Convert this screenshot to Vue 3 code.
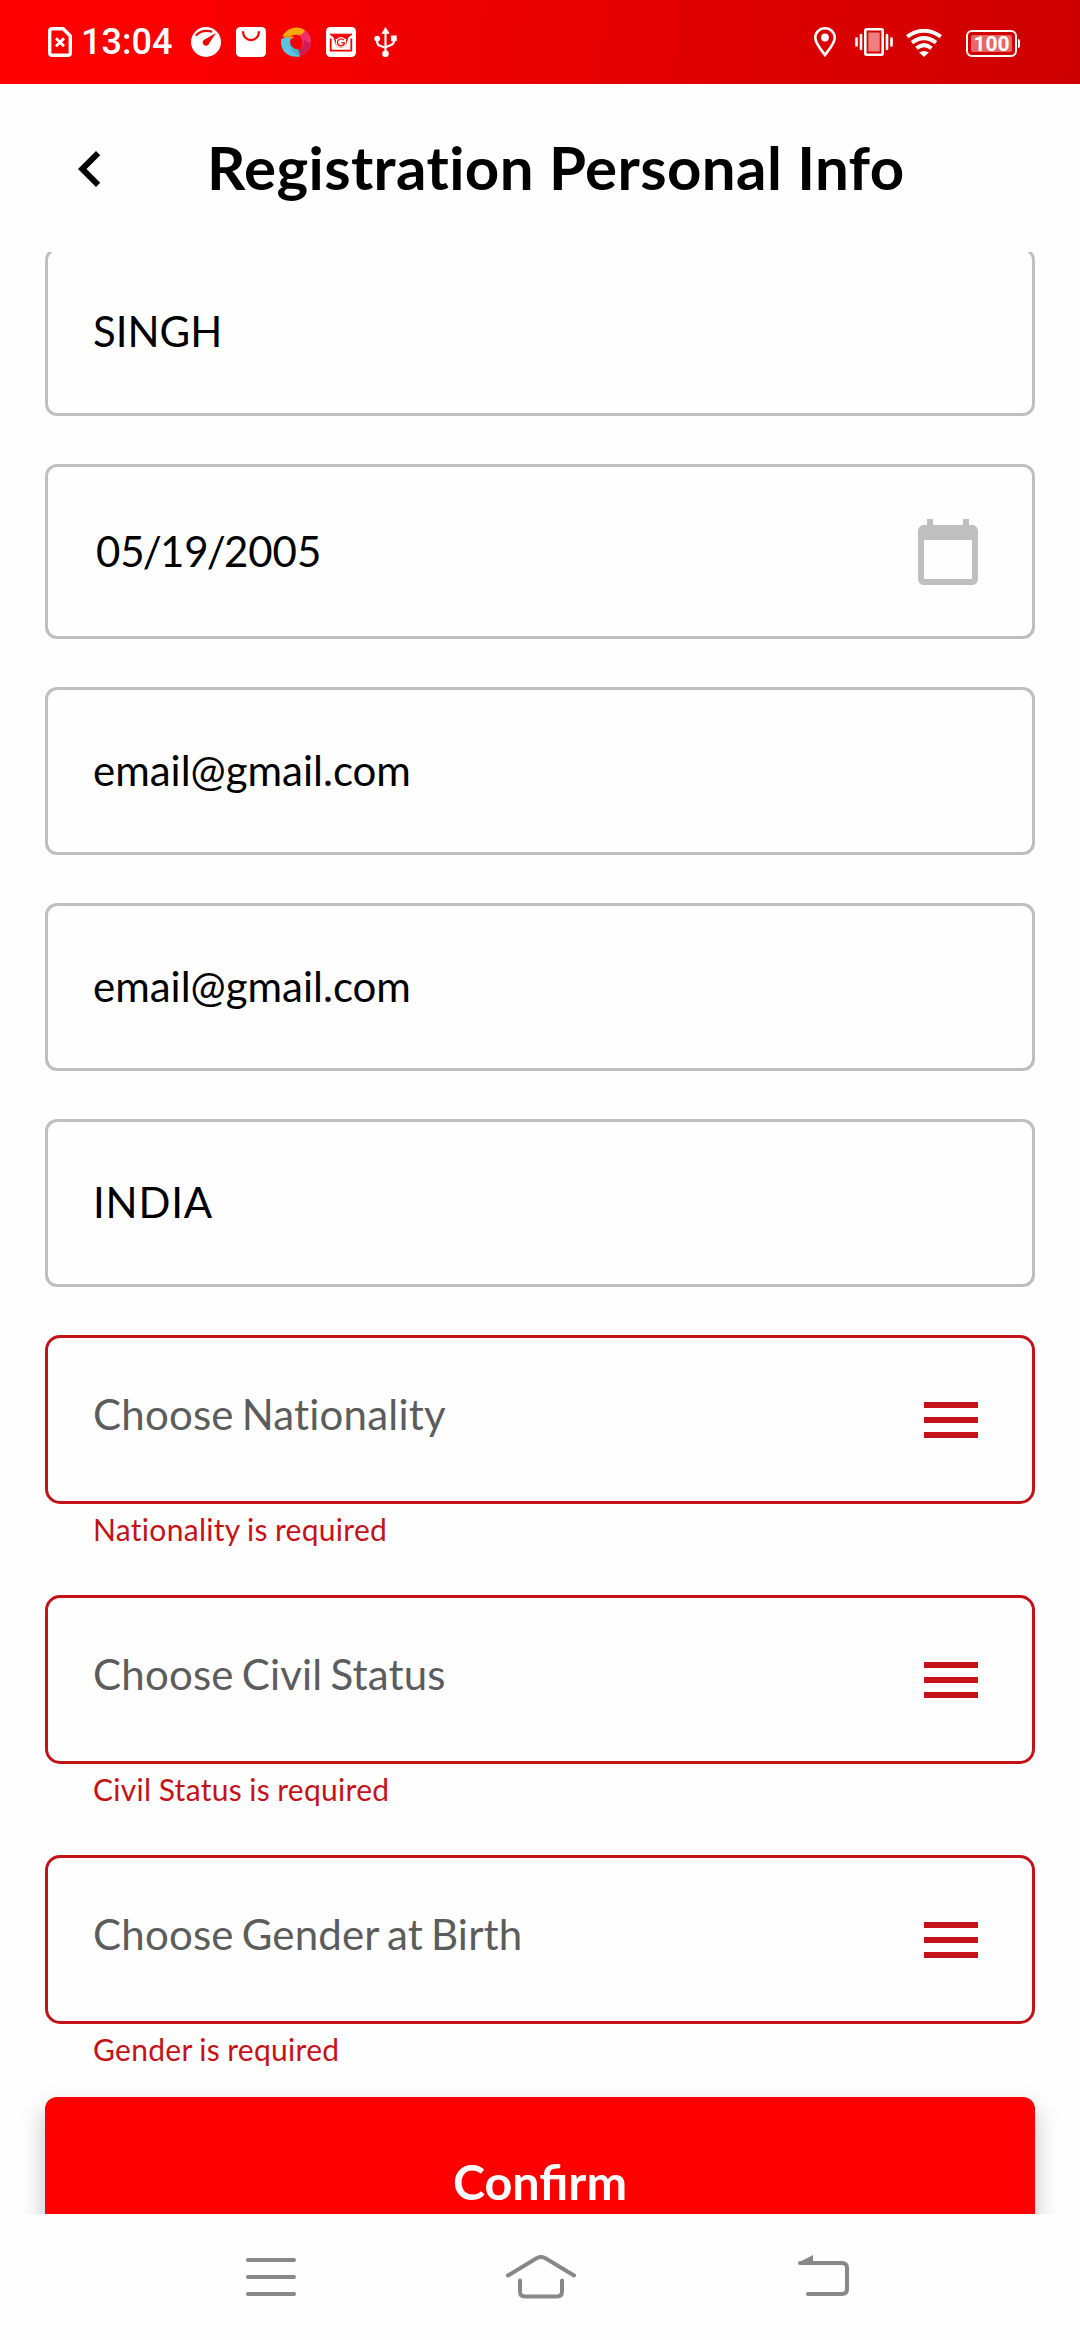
<script setup>
const fields = [
  { id: 'surname', value: 'SINGH' },
  { id: 'birthdate', value: '05/19/2005', kind: 'date' },
  { id: 'email', value: 'email@gmail.com' },
  { id: 'emailConfirm', value: 'email@gmail.com' },
  { id: 'country', value: 'INDIA', kind: 'country' },
]

const choices = [
  { id: 'nationality', label: 'Choose Nationality', error: 'Nationality is required' },
  { id: 'civil', label: 'Choose Civil Status', error: 'Civil Status is required' },
  { id: 'gender', label: 'Choose Gender at Birth', error: 'Gender is required' },
]
</script>

<template>
  <div class="screen">
    <div class="status">
      <div class="status-left">
        <svg class="sim" width="24" height="30" viewBox="0 0 24 30" fill="none" stroke="#fff">
          <path d="M4 1.7H15.2L22.3 9V26Q22.3 28.3 20 28.3H4Q1.7 28.3 1.7 26V4Q1.7 1.7 4 1.7Z" stroke-width="3.4" />
          <path d="M8 11.3L16 19.3M16 11.3L8 19.3" stroke-width="2.8" />
        </svg>
        <span class="clock">13:04</span>
        <svg width="30" height="30" viewBox="0 0 30 30">
          <circle cx="15" cy="15" r="15" fill="#fff" />
          <path d="M4.7 8.6C8.5 4.5 14.5 2.9 21 4.6" fill="none" stroke="#f60000" stroke-width="2.2" />
          <path d="M25 6L18.2 16.2A3.3 3.3 0 1 1 13.6 12.4Z" fill="#f60000" />
        </svg>
        <svg width="30" height="30" viewBox="0 0 30 30">
          <rect width="30" height="30" rx="4.5" fill="#fff" />
          <path d="M7 4.2C7 16 23 16 23 4.2" fill="none" stroke="#f50000" stroke-width="2.2" />
        </svg>
        <svg width="30" height="30" viewBox="0 0 30 30">
          <path d="M1.5 9.5C5 1.5 15-2.5 24 3L23 12C19 7 13 6.5 8.5 10Q5 9 1.5 9.5Z" fill="#ffa60a" />
          <path d="M1.5 9.5Q7.5 7 13.5 10.5L9 12.5Z" fill="#f88b08" />
          <path d="M24 3C31 8 32 17 27 24Q25 27 21 28L14 26C20 23.5 23 18 20.5 12L18 7.8Q22 8 24 3Z" fill="#ee3168" />
          <path d="M22.5 12Q24 22 14 26L21 28Q29 24 30 16Q27 16 22.5 12Z" fill="#cd1c55" />
          <path d="M0 12.5Q4.5 9 10 11C7.5 17 10 21.5 17 22.5Q18.5 26 19 29.5C7 31.5-1.5 23 0 12.5Z" fill="#5bc4dc" />
          <path d="M8.8 15Q10 21.5 17 22.5L19 29.5Q9.5 25 8.8 15Z" fill="#48aed0" />
        </svg>
        <svg width="30" height="30" viewBox="0 0 30 30">
          <rect width="30" height="30" rx="4.5" fill="#fff" />
          <g fill="none" stroke="#f20000" stroke-width="1.8">
            <path d="M4.700 11.500V23.700H25.300V11.500" />
            <path d="M4 7.200H26L20 11.500H10Z" fill="#f20000" stroke-width="1" />
            <path d="M7.500 8L10.500 17.300Q15 23 19.500 17.300L22.500 8" stroke-width="1.400" />
          </g>
          <circle cx="15" cy="15.300" r="5.200" fill="#fff" />
          <path d="M17.800 13.200A3.500 3.500 0 1 0 18.500 15.800H15.200" fill="none" stroke="#f20000" stroke-width="1.300" />
        </svg>
        <svg class="usb" width="24" height="30" viewBox="0 0 24 30">
          <path d="M11.500 5V25M3.200 12V15Q3.200 18 6 18.800L11.500 20.800M19.800 12V14.500Q19.800 17 17 18L11.500 20.300" fill="none" stroke="#fff" stroke-width="2.100" />
          <path d="M11.500 0L15.700 6.800H7.300Z" fill="#fff" />
          <rect x="17" y="8.500" width="5.700" height="5.700" fill="#fff" />
          <circle cx="3.200" cy="11.600" r="2.900" fill="#fff" />
          <circle cx="11.500" cy="26.700" r="3.300" fill="#fff" />
        </svg>
      </div>
      <div class="status-right">
        <svg class="pin" width="22" height="30" viewBox="0 0 22 30">
          <path d="M11 28C7.500 23 1.300 16.500 1.300 10.700A9.700 9.400 0 0 1 20.700 10.700C20.700 16.500 14.500 23 11 28Z" fill="none" stroke="#fff" stroke-width="2.600" />
          <circle cx="11" cy="10.500" r="3.900" fill="#fff" />
        </svg>
        <svg class="vibrate" width="38" height="28" viewBox="0 0 38 28">
          <rect x="10.300" y="1.300" width="17.400" height="25.400" rx="1.500" fill="none" stroke="#fff" stroke-width="2.600" />
          <rect x="12.800" y="4" width="12.400" height="20" fill="#f08080" stroke="#d00000" stroke-width="1" />
          <path d="M6 7V21M32 7V21" stroke="#fff" stroke-width="2.600" stroke-linecap="round" />
          <path d="M1.500 10.500V17.500M36.500 10.500V17.500" stroke="#fff" stroke-width="2.600" stroke-linecap="round" />
        </svg>
        <svg class="wifi" width="36" height="28" viewBox="0 0 36 28" fill="none" stroke="#fff" stroke-width="4">
          <path d="M1.200 7.600Q18-4 34.800 7.600" />
          <path d="M6 13.600Q18 4.600 30 13.600" />
          <path d="M10.500 19.200Q18 13 25.500 19.200" />
          <path d="M13.200 23.600Q18 20.200 22.800 23.600L18 28Z" fill="#fff" stroke="none" />
        </svg>
        <div class="battery"><span>100</span></div>
      </div>
    </div>

    <header class="header">
      <svg class="back" width="72" height="72" viewBox="0 0 24 24">
        <path d="M15.410 7.410L14 6l-6 6 6 6 1.410-1.410L10.830 12z" />
      </svg>
      <h1>Registration Personal Info</h1>
    </header>

    <main class="viewport">
      <div class="form">
        <div v-for="f in fields" :key="f.id" class="field" :class="f.kind">
          <span v-if="f.kind === 'date'"><template v-for="(part, i) in f.value.split('/')" :key="i"><i v-if="i" class="slash">/</i>{{ part }}</template></span>
          <span v-else>{{ f.value }}</span>
          <svg v-if="f.kind === 'date'" width="72" height="72" viewBox="0 0 24 24" fill="#bfbfbf">
            <path d="M20 3h-1V1h-2v2H7V1H5v2H4c-1.100 0-2 .9-2 2v16c0 1.100.9 2 2 2h16c1.100 0 2-.9 2-2V5c0-1.100-.9-2-2-2zm0 18H4V8h16v13z" />
          </svg>
        </div>
        <div v-for="c in choices" :key="c.id" class="choice">
          <div class="field invalid">
            <span>{{ c.label }}</span>
            <svg width="72" height="72" viewBox="0 0 24 24" fill="#c41218">
              <path d="M3 18h18v-2H3v2zm0-5h18v-2H3v2zm0-7v2h18V6H3z" />
            </svg>
          </div>
          <p class="error">{{ c.error }}</p>
        </div>
        <button class="confirm">Confirm</button>
      </div>
    </main>

    <nav class="navbar">
      <svg width="50" height="44" viewBox="0 0 50 44">
        <path d="M2 5H48M2 22H48M2 39H48" />
      </svg>
      <svg width="70" height="44" viewBox="0 0 70 44">
        <path d="M2 20.500L30.500 3.200Q35 .8 39.500 3.200L68 20.500M14 25.500V36.500Q14 41.500 19 41.500H51Q56 41.500 56 36.500V25.500" />
      </svg>
      <svg width="52" height="44" viewBox="0 0 52 44">
        <path d="M10 39H44Q49 39 49 34V13Q49 8 44 8H2" />
        <path d="M.5 7.500L15 0V9H2Z" class="solid" />
      </svg>
    </nav>
  </div>
</template>

<style>
body {
  margin: 0;
  background: #fefefe;
}
</style>

<style scoped>
.screen {
  box-sizing: border-box;
  width: 1080px;
  height: 2340px;
  overflow: hidden;
  display: grid;
  grid-template-rows: 84px 168px 1fr 126px;
  background: #fefefe;
  font-family: Lato, sans-serif;
  font-variant-ligatures: none;
  color: #000;
}
svg {
  display: block;
  flex: none;
}
.status {
  display: flex;
  justify-content: space-between;
  align-items: center;
  padding: 0 60px 0 48px;
  background: linear-gradient(95deg, #ff0000, #fc0000 15%, #cd0000);
}
.status-left {
  display: flex;
  align-items: center;
  gap: 15px;
}
.clock {
  width: 90px;
  margin: 0 5px 0 -6px;
  font: 500 36px/42px Roboto, sans-serif;
  color: #fff;
}
.usb {
  margin-left: 3px;
}
.status-right {
  display: flex;
  align-items: center;
}
.vibrate {
  margin-left: 19px;
}
.wifi {
  margin: 2px 0 0 13px;
}
.battery {
  position: relative;
  box-sizing: border-box;
  width: 51px;
  height: 27px;
  margin: 3px 3px 0 24px;
  border: 2px solid #fff;
  border-radius: 6px;
  display: flex;
}
.battery::after {
  content: '';
  position: absolute;
  left: 50px;
  top: 7px;
  width: 2px;
  height: 9px;
  border-radius: 0 2px 2px 0;
  background: #fff;
}
.battery span {
  flex: 1;
  margin: 3px;
  border-radius: 2px;
  background: #e86666;
  color: #fff;
  font: 700 21px/18px Roboto, sans-serif;
  text-align: center;
}
.header {
  display: flex;
  align-items: center;
  padding-left: 54px;
}
.back {
  margin-top: 2px;
}
.header h1 {
  margin: 0 0 2px 81px;
  font-size: 60px;
  font-weight: 700;
  line-height: 72px;
  letter-spacing: 0.4px;
  white-space: nowrap;
}
.viewport {
  overflow: hidden;
  min-height: 0;
}
.form {
  display: flex;
  flex-direction: column;
  gap: 48px;
  margin-top: -4px;
  padding: 0 45px;
}
.field {
  box-sizing: border-box;
  height: 168px;
  border: 3px solid #bfbfbf;
  border-radius: 12px;
  padding: 0 45px;
  display: flex;
  align-items: center;
  justify-content: space-between;
}
.field span {
  font-size: 42px;
  line-height: 50px;
  padding-bottom: 3px;
}
.field.date {
  height: 175px;
  padding: 0 48px;
}
.field.date span {
  padding-bottom: 2px;
}
.slash {
  margin: 0 -1.9px;
  font-style: normal;
}
.field.country span {
  letter-spacing: 0.8px;
}
.field.invalid {
  height: 169px;
  border-color: #c41218;
  border-radius: 15px;
}
.field.invalid span {
  color: #5c5c5c;
  padding-bottom: 12px;
  letter-spacing: 0.2px;
  word-spacing: -3px;
}
.error {
  margin: 7px 48px 0;
  height: 36px;
  font-size: 30px;
  line-height: 36px;
  letter-spacing: 0.3px;
  word-spacing: -0.8px;
  color: #c41218;
}
.confirm {
  height: 168px;
  margin-top: -18px;
  border: 0;
  border-radius: 12px;
  background: #ff0000;
  color: #fff;
  font: 700 48.5px/58px Lato, sans-serif;
  font-variant-ligatures: normal;
  box-shadow: 0 12px 24px rgba(0, 0, 0, 0.25);
}
.navbar {
  display: flex;
  align-items: center;
  padding: 0 0 1px 246px;
}
.navbar svg {
  fill: none;
  stroke: #888;
  stroke-width: 4;
  stroke-linecap: round;
}
.navbar svg + svg {
  margin-left: 210px;
}
.navbar svg:last-child {
  margin-left: 222px;
}
.navbar .solid {
  fill: #888;
  stroke: none;
}
</style>
